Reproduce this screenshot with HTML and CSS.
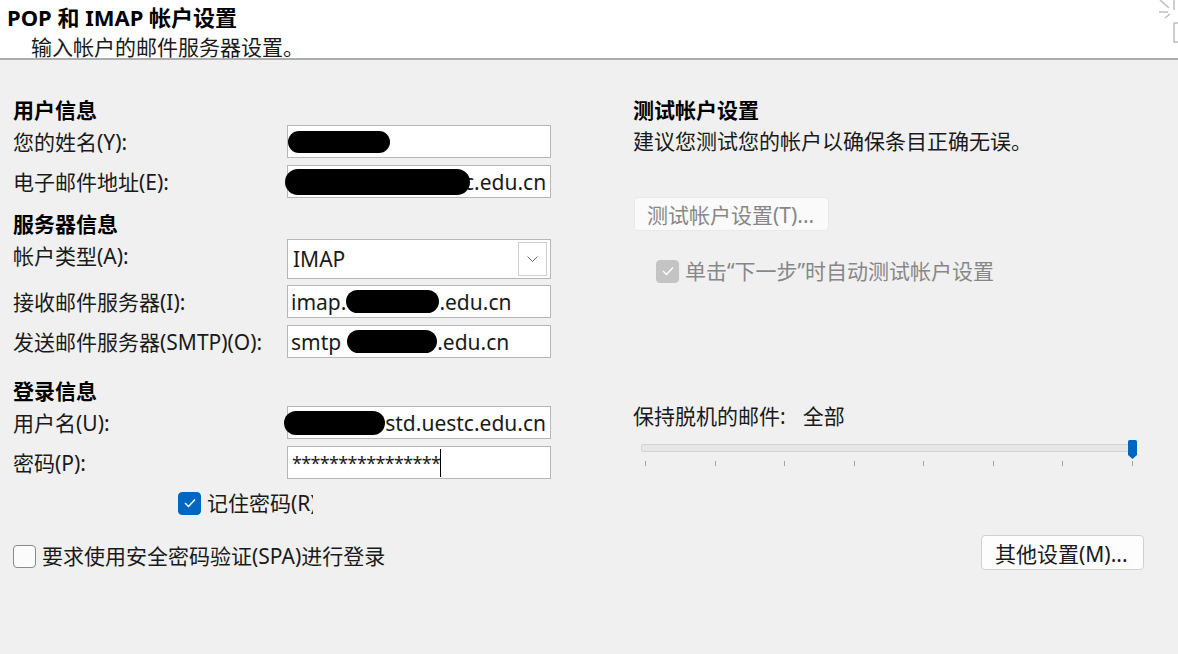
FILE: index.html
```html
<!DOCTYPE html>
<html lang="zh-CN">
<head>
    <meta charset="UTF-8">
    <meta name="viewport" content="width=device-width, initial-scale=1.0">
    <title>POP 和 IMAP 帐户设置</title>
    <link rel="stylesheet" href="styles.css">
</head>
<body>

    <div class="header">
        <h1>POP 和 IMAP 帐户设置</h1>
        <p>输入帐户的邮件服务器设置。</p>
        <svg class="corner-icon" width="20" height="46" viewBox="0 0 20 46">
            <path d="M2 0 L11 8 M1 12 L10 12 M7 18 L12 14 M16 0 V10 M16 23 V42 H20 M16 23 H20" fill="none" stroke="#bdbdbd" stroke-width="1.5"/>
        </svg>
    </div>

    <div class="columns">
        <div class="col-left">
            <h2 class="group-title">用户信息</h2>
            <div class="form-row row-first">
                <label>您的姓名(Y):</label>
                <div class="field"><span class="blot blot-name"></span></div>
            </div>
            <div class="form-row">
                <label>电子邮件地址(E):</label>
                <div class="field"><span class="blot blot-mail"></span><span class="tail">c.edu.cn</span></div>
            </div>

            <h2 class="group-title group-next">服务器信息</h2>
            <div class="form-row row-select">
                <label>帐户类型(A):</label>
                <div class="field select">
                    <span>IMAP</span>
                    <span class="drop-btn">
                        <svg width="11" height="6" viewBox="0 0 11 6"><path d="M0.5 0.5 L5.5 5.5 L10.5 0.5" fill="none" stroke="#6b6b6b" stroke-width="1"/></svg>
                    </span>
                </div>
            </div>
            <div class="form-row row-after-select">
                <label>接收邮件服务器(I):</label>
                <div class="field">imap.<span class="blot blot-server"></span><span>.edu.cn</span></div>
            </div>
            <div class="form-row">
                <label>发送邮件服务器(SMTP)(O):</label>
                <div class="field">smtp<span class="blot blot-server blot-smtp"></span><span>.edu.cn</span></div>
            </div>

            <h2 class="group-title group-login">登录信息</h2>
            <div class="form-row row-first">
                <label>用户名(U):</label>
                <div class="field"><span class="blot blot-user"></span><span class="tail">std.uestc.edu.cn</span></div>
            </div>
            <div class="form-row">
                <label>密码(P):</label>
                <div class="field password">****************<span class="caret"></span></div>
            </div>

            <div class="check-row remember">
                <span class="checkbox checked">
                    <svg width="12" height="10" viewBox="0 0 12 10"><path d="M1 5 L4.5 8.5 L11 1.5" fill="none" stroke="#fff" stroke-width="1.4"/></svg>
                </span>
                <span class="remember-text">记住密码(R)</span>
            </div>
        </div>

        <div class="col-right">
            <h2 class="group-title">测试帐户设置</h2>
            <p class="hint">建议您测试您的帐户以确保条目正确无误。</p>
            <button class="btn btn-test" disabled>测试帐户设置(T)...</button>
            <div class="check-row auto-test">
                <span class="checkbox disabled">
                    <svg width="12" height="10" viewBox="0 0 12 10"><path d="M1 5 L4.5 8.5 L11 1.5" fill="none" stroke="#fff" stroke-width="1.4"/></svg>
                </span>
                <span>单击“下一步”时自动测试帐户设置</span>
            </div>

            <div class="offline">保持脱机的邮件:<span class="offline-value">全部</span></div>
            <div class="slider">
                <div class="track"></div>
                <svg class="thumb" width="9" height="19" viewBox="0 0 9 19">
                    <path d="M1.5 0 H7.5 Q9 0 9 1.5 V15 L4.5 19 L0 15 V1.5 Q0 0 1.5 0 Z" fill="#0067c0"/>
                </svg>
                <div class="ticks">
                    <i></i><i></i><i></i><i></i><i></i><i></i><i></i><i></i>
                </div>
            </div>
        </div>
    </div>

    <div class="bottom-row">
        <div class="check-row spa">
            <span class="checkbox"></span>
            <span>要求使用安全密码验证(SPA)进行登录</span>
        </div>
        <button class="btn btn-more">其他设置(M)...</button>
    </div>

</body>
</html>
```

FILE: styles.css
```css
:root {
    --bg-color: #f0f0f0;
    --text-color: #1a1a1a;
    --accent-color: #0067c0;
    --field-border: #b6b6b6;
    --muted-color: #878787;
}

body {
    margin: 0;
    width: 1178px;
    height: 654px;
    overflow: hidden;
    background: var(--bg-color);
    color: var(--text-color);
    font-family: "Noto Sans", "Noto Sans CJK SC", sans-serif;
    font-size: 21px;
}

.header {
    position: relative;
    height: 58px;
    background: #fff;
    border-bottom: 2px solid #adadad;
    overflow: hidden;
}

.header h1 {
    margin: 0;
    padding: 3px 0 0 7px;
    font-size: 22px;
    font-weight: 700;
    line-height: 28px;
    color: #000;
}

.header p {
    margin: 3px 0 0 0;
    padding-left: 31px;
    line-height: 26px;
}

.corner-icon {
    position: absolute;
    top: 0;
    right: 0;
}

.columns {
    display: flex;
    align-items: flex-start;
    padding: 37px 0 0 13px;
}

.col-left {
    width: 538px;
}

.col-right {
    width: 511px;
    margin-left: 82px;
}

.group-title {
    margin: 0;
    font-size: 21px;
    font-weight: 700;
    line-height: 26px;
    color: #000;
}

.group-next {
    margin-top: 13px;
}

.group-login {
    margin-top: 20px;
}

.form-row {
    display: flex;
    align-items: center;
    margin-top: 7px;
}

.form-row.row-first {
    margin-top: 2px;
}

.form-row.row-select {
    margin-top: 2px;
    align-items: flex-start;
}

.form-row.row-select label {
    margin-top: 4px;
}

.form-row.row-after-select {
    margin-top: 6px;
}

.group-login + .form-row {
    margin-top: 2px;
}

.form-row label {
    width: 274px;
    line-height: 26px;
    white-space: nowrap;
}

.field {
    display: flex;
    align-items: center;
    width: 264px;
    height: 33px;
    box-sizing: border-box;
    padding: 0 4px 0 3px;
    background: #fff;
    border: 1px solid var(--field-border);
    font-size: 21px;
    white-space: nowrap;
}

.blot {
    position: relative;
    z-index: 1;
    flex-shrink: 0;
    display: inline-block;
    background: #000;
    border-radius: 14px;
}

.blot-name {
    width: 102px;
    height: 22px;
    margin-left: -3px;
}

.blot-mail {
    width: 185px;
    height: 26px;
    margin-left: -6px;
    margin-right: auto;
}

.blot-user {
    width: 101px;
    height: 24px;
    margin-left: -7px;
    margin-right: auto;
}

.blot-server {
    width: 93px;
    height: 23px;
}

.blot-smtp {
    width: 90px;
    margin-left: 6px;
}

.tail {
    margin-left: -6px;
}

.select {
    position: relative;
    height: 40px;
    padding-left: 5px;
}

.drop-btn {
    position: absolute;
    top: 2px;
    right: 3px;
    bottom: 2px;
    width: 29px;
    box-sizing: border-box;
    border: 1px solid #cfcfcf;
    background: #fff;
    display: flex;
    align-items: center;
    justify-content: center;
}

.password {
    padding-left: 4px;
    font-size: 18px;
    letter-spacing: -0.65px;
}

.caret {
    display: inline-block;
    width: 1px;
    height: 28px;
    margin-left: 0;
    background: #000;
}

.check-row {
    display: flex;
    align-items: center;
    line-height: 26px;
}

.checkbox {
    display: flex;
    align-items: center;
    justify-content: center;
    width: 23px;
    height: 23px;
    box-sizing: border-box;
    margin-right: 6px;
    border: 1px solid #8a8a8a;
    border-radius: 4px;
    background: #fbfbfb;
    flex-shrink: 0;
}

.checkbox.checked {
    border-color: var(--accent-color);
    background: var(--accent-color);
}

.checkbox.disabled {
    border-color: #c4c4c4;
    background: #c4c4c4;
}

.remember {
    margin: 11px 0 0 165px;
}

.remember-text {
    width: 106px;
    overflow: hidden;
    white-space: nowrap;
}

.hint {
    margin: 5px 0 0 0;
    line-height: 26px;
}

button {
    font-family: inherit;
    font-size: 21px;
}

.btn {
    height: 35px;
    padding: 0 0 0 12px;
    text-align: left;
    border: 1px solid #d0d0d0;
    border-radius: 4px;
    background: #fdfdfd;
    color: var(--text-color);
    white-space: nowrap;
    cursor: pointer;
}

.btn-test {
    display: block;
    width: 195px;
    height: 34px;
    margin: 43px 0 0 1px;
    border-color: #e9e9e9;
    background: #fafafa;
    color: var(--muted-color);
    cursor: default;
}

.auto-test {
    margin: 27px 0 0 23px;
    color: var(--muted-color);
}

.offline {
    margin-top: 119px;
    line-height: 26px;
}

.offline-value {
    margin-left: 17px;
}

.slider {
    position: relative;
    width: 496px;
    margin: 15px 0 0 8px;
}

.track {
    height: 8px;
    box-sizing: border-box;
    border: 1px solid #d3d3d3;
    border-radius: 2px;
    background: #e7e7e7;
}

.thumb {
    position: absolute;
    top: -4px;
    left: 487px;
}

.ticks {
    display: flex;
    justify-content: space-between;
    padding: 0 4px;
    margin-top: 9px;
}

.ticks i {
    width: 1px;
    height: 5px;
    background: #a3a3a3;
}

.bottom-row {
    display: flex;
    justify-content: space-between;
    align-items: flex-start;
    padding: 0 34px 0 13px;
    margin-top: 19px;
}

.spa {
    margin-top: 8px;
}

.btn-more {
    width: 163px;
    padding-left: 13px;
}
```
